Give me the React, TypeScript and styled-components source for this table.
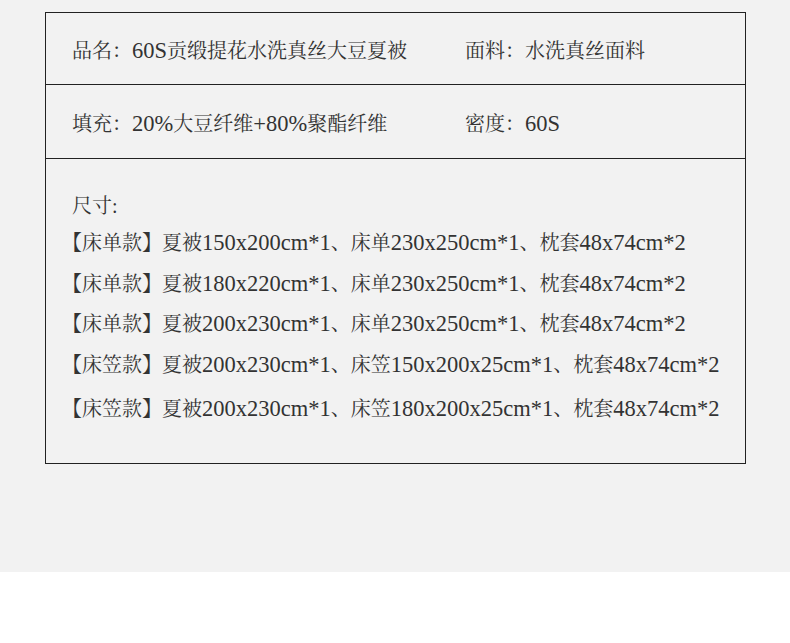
import React from "react";
import styled, {createGlobalStyle} from "styled-components";

const GlobalStyle = createGlobalStyle`
  html, body {
    margin: 0;
    padding: 0;
    background: #ffffff;
  }
  body {
    font-family: "Liberation Serif", "Noto Serif CJK SC", "Noto Sans CJK SC", serif;
    color: #333333;
  }
`

type Spec = {
   label: string
   value: string
}

const topRows: Spec[][] = [
   [{label: "品名：", value: "60S贡缎提花水洗真丝大豆夏被"}, {label: "面料：", value: "水洗真丝面料"}],
   [{label: "填充：", value: "20%大豆纤维+80%聚酯纤维"}, {label: "密度：", value: "60S"}],
];

const sizes = [
   "【床单款】夏被150x200cm*1、床单230x250cm*1、枕套48x74cm*2",
   "【床单款】夏被180x220cm*1、床单230x250cm*1、枕套48x74cm*2",
   "【床单款】夏被200x230cm*1、床单230x250cm*1、枕套48x74cm*2",
   "【床笠款】夏被200x230cm*1、床笠150x200x25cm*1、枕套48x74cm*2",
   "【床笠款】夏被200x230cm*1、床笠180x200x25cm*1、枕套48x74cm*2",
];

// latin runs are set a bit larger, like the serif font of the original
const Mixed: React.FC<{text: string}> = ({text}) => (
   <>
      {text.split(/([\x20-\x7E]+)/).filter(Boolean).map((part, i) =>
         /^[\x20-\x7E]+$/.test(part) ? <Latin key={i}>{part}</Latin> : <React.Fragment key={i}>{part}</React.Fragment>
      )}
   </>
);

export default function App() {
   return (
      <>
         <GlobalStyle/>
         <Page>
            <Table>
               {topRows.map((row, i) => (
                  <Row key={i} height={i === 0 ? 72 : 74}>
                     {row.map((cell) => (
                        <Cell key={cell.label}><Mixed text={cell.label + cell.value}/></Cell>
                     ))}
                  </Row>
               ))}
               <SizeBlock>
                  <SizeTitle>尺寸:</SizeTitle>
                  {sizes.map((line, i) => (
                     <SizeLine key={i} gapAbove={i === 0 ? 13 : i === sizes.length - 1 ? 20 : 16.5}>
                        <Mixed text={line}/>
                     </SizeLine>
                  ))}
               </SizeBlock>
            </Table>
         </Page>
      </>
   );
}

const Page = styled.div`
  background: #f2f2f2;
  height: 572px;
  padding: 12px 0 0 45px;
  box-sizing: border-box;
`
const Table = styled.div`
  width: 701px;
  box-sizing: border-box;
  border: 1px solid #222222;
`
const Row = styled.div<{height: number}>`
  display: flex;
  align-items: center;
  height: ${p => p.height}px;
  padding: 5px 0 0 26px;
  box-sizing: border-box;
  border-bottom: 1px solid #222222;
`
const Cell = styled.div`
  font-size: 20px;
  line-height: 24px;
  white-space: nowrap;
  &:first-child {
    width: 393px;
  }
`
const Latin = styled.span`
  font-size: 22.5px;
  line-height: 1;
`
const SizeBlock = styled.div`
  display: flex;
  flex-direction: column;
  height: 304px;
  padding: 35px 0 0 26px;
  box-sizing: border-box;
`
const SizeTitle = styled.div`
  font-size: 20px;
  line-height: 24px;
`
const SizeLine = styled.div<{gapAbove: number}>`
  font-size: 20px;
  line-height: 24px;
  white-space: nowrap;
  margin-top: ${p => p.gapAbove}px;
  text-spacing-trim: trim-start;
`
